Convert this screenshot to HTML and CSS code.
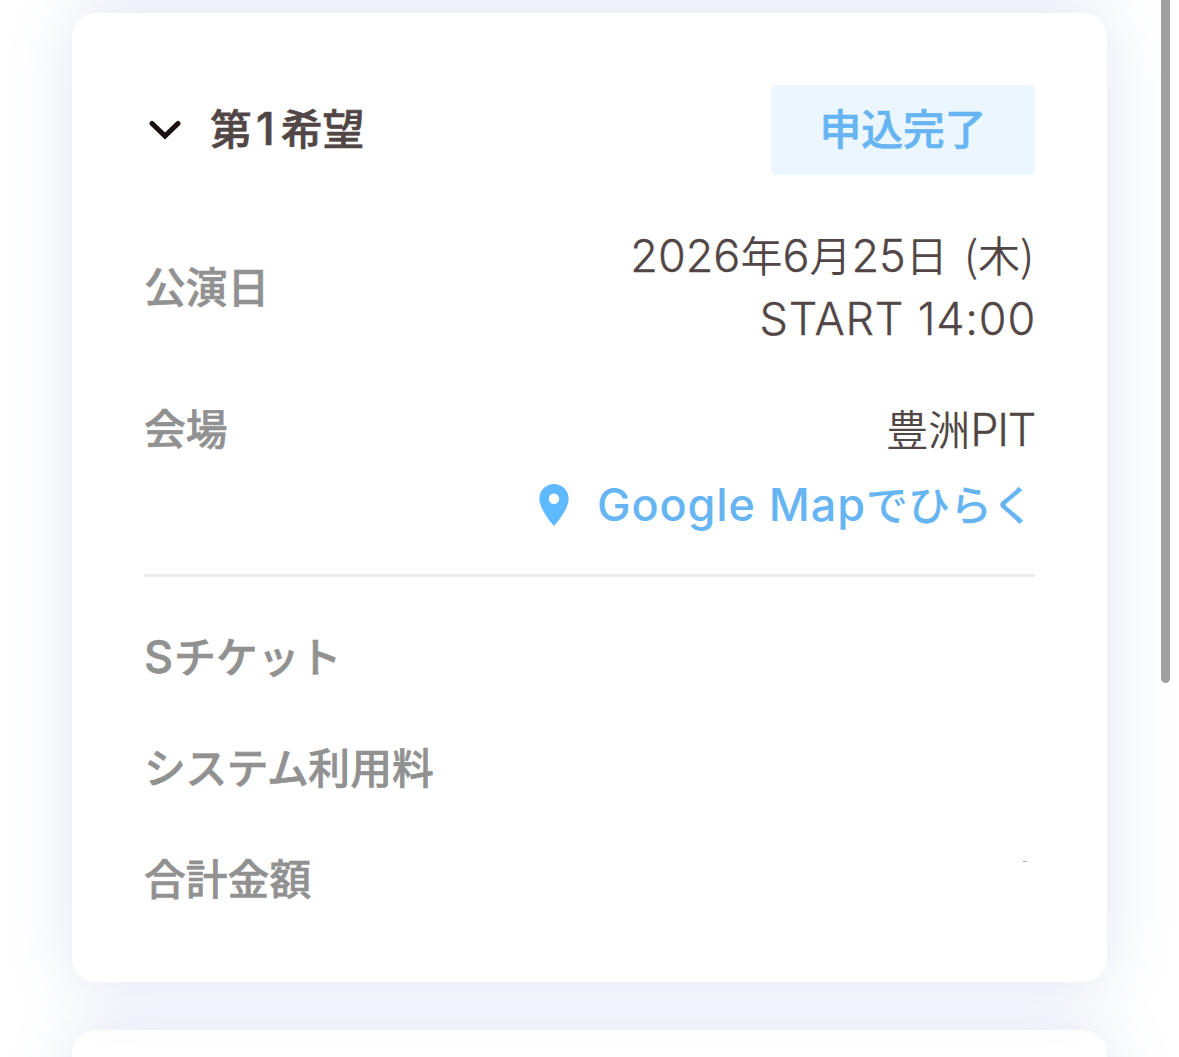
FILE: index.html
```
<!DOCTYPE html>
<html lang="ja">
    <head>
        <meta charset="UTF-8" />
        <meta name="viewport" content="width=device-width, initial-scale=1.0" />
        <title>申込内容</title>
        <link rel="stylesheet" href="styles.css">
    </head>
    <body>
        <main class="list">
            <section class="card card-prev"></section>
            <section class="card">
                <header class="card-header">
                    <svg class="chevron" viewBox="0 0 34 22" fill="none">
                        <path d="M4 4.5L17 17L30 4.5" stroke="#1a1010" stroke-width="5.2" stroke-linecap="round" stroke-linejoin="miter" />
                    </svg>
                    <h2 class="title">第<span class="num">1</span>希望</h2>
                    <span class="badge">申込完了</span>
                </header>
                <dl class="row row-date">
                    <dt>公演日</dt>
                    <dd>
                        <div class="date"><span class="en">2026</span>年<span class="en">6</span>月<span class="en">25</span>日 <span class="paren">(木)</span></div>
                        <div class="start en">START 14:00</div>
                    </dd>
                </dl>
                <dl class="row row-place">
                    <dt>会場</dt>
                    <dd>豊洲<span class="en pit">PIT</span></dd>
                </dl>
                <a class="map">
                    <svg class="pin" viewBox="5 2 14 20">
                        <path fill="#5eb9ff" d="M12 2C8.13 2 5 5.13 5 9c0 5.25 7 13 7 13s7-7.75 7-13c0-3.87-3.13-7-7-7zm0 9.5a2.5 2.5 0 0 1 0-5 2.5 2.5 0 0 1 0 5z" />
                    </svg>
                    <span class="map-text"><span class="map-en">Google Map</span>でひらく</span>
                </a>
                <hr class="line" />
                <dl class="row row-price">
                    <dt><span class="seat">S</span>チケット</dt>
                </dl>
                <dl class="row row-price">
                    <dt><span class="kana">システム</span>利用料</dt>
                </dl>
                <dl class="row row-price">
                    <dt>合計金額</dt>
                    <dd class="mark"></dd>
                </dl>
            </section>
            <section class="card card-next"></section>
        </main>
        <div class="scrollbar"></div>
    </body>
</html>
```

FILE: styles.css
```
* {
    padding: 0;
    margin: 0;
    box-sizing: border-box;
}
body {
    height: 1057px;
    overflow: hidden;
    background-color: #fff;
    font-family: "Noto Sans CJK JP", sans-serif;
    font-size: 42px;
    color: #514645;
}
.list {
    display: flex;
    flex-direction: column;
    gap: 48px;
    height: 1292px;
    padding: 0 72px;
    margin-top: -235px;
    overflow: hidden;
}
.card {
    flex: none;
    height: 969px;
    padding: 72px;
    border-radius: 24px;
    background-color: #fff;
    box-shadow: 0 0 66px rgba(80, 115, 190, 0.18);
}
.card-prev {
    height: 200px;
}
.card-next {
    height: 300px;
}
/* the main card covers the shadows of its neighbours */
.card:nth-child(2) {
    position: relative;
    z-index: 1;
}
.card-next {
    position: relative;
}
.card-header {
    display: flex;
    align-items: center;
    height: 90px;
    margin-bottom: 48px;
}
.chevron {
    width: 34px;
    height: 22px;
    margin: 0 28px 0 4px;
}
.title,
.badge,
dt {
    font-size: 41.8px;
    font-weight: 500;
    -webkit-text-stroke: 0.6px currentColor;
}
.title {
    height: 60px;
    line-height: 55px;
}
.num {
    display: inline-block;
    width: 29px;
    padding-right: 2px;
    font-family: Inter, sans-serif;
    font-size: 45px;
    line-height: 1;
    text-align: center;
}
.badge {
    width: 264px;
    height: 90px;
    margin-left: auto;
    border-radius: 5px;
    background-color: #ebf6ff;
    color: #66b5f2;
    line-height: 85px;
    text-align: center;
}
.row {
    display: flex;
    align-items: center;
    justify-content: space-between;
    line-height: 63px;
}
dt {
    padding-bottom: 2px;
    color: #919191;
}
dd {
    padding-bottom: 3px;
    text-align: right;
    font-weight: 350;
}
.en {
    font-family: Inter, sans-serif;
    font-size: 45px;
    font-weight: 300;
    line-height: 1;
    -webkit-text-stroke: 0.3px currentColor;
}
.date,
.start {
    height: 63px;
    line-height: 63px;
}
.date {
    margin-right: 1px;
}
.paren {
    margin-left: 7px;
}
.start {
    padding-top: 2px;
    margin-right: -1px;
    letter-spacing: 0.8px;
}
.pit {
    letter-spacing: -1.3px;
}
.row-date {
    height: 126px;
}
.row-place {
    height: 63px;
    margin-top: 48px;
}
.map {
    display: flex;
    align-items: center;
    justify-content: flex-end;
    height: 63px;
    margin-top: 12px;
    line-height: 63px;
    font-weight: 500;
    color: #66b5f2;
}
.map-text {
    padding-bottom: 3px;
    margin-right: 1px;
}
.map-en {
    font-family: Inter, sans-serif;
    font-size: 45px;
    line-height: 1;
    letter-spacing: 0.9px;
}
.pin {
    width: 30px;
    height: 42px;
    margin: 2px 28px 0 0;
}
.line {
    height: 3px;
    margin: 39px 0 48px;
    border: none;
    background-color: #ececec;
}
.row-price {
    height: 63px;
    margin-bottom: 48px;
}
.seat {
    font-family: Inter, sans-serif;
    font-size: 45px;
    line-height: 1;
    letter-spacing: 1px;
}
.kana {
    letter-spacing: -0.4px;
}
.mark {
    width: 4px;
    height: 1px;
    padding: 0;
    margin: -34px 8px 0 0;
    background-color: #aaa;
}
.scrollbar {
    position: fixed;
    top: -20px;
    right: 9px;
    width: 9px;
    height: 703px;
    border-radius: 5px;
    background-color: #a0a0a0;
    z-index: 3;
}
```
